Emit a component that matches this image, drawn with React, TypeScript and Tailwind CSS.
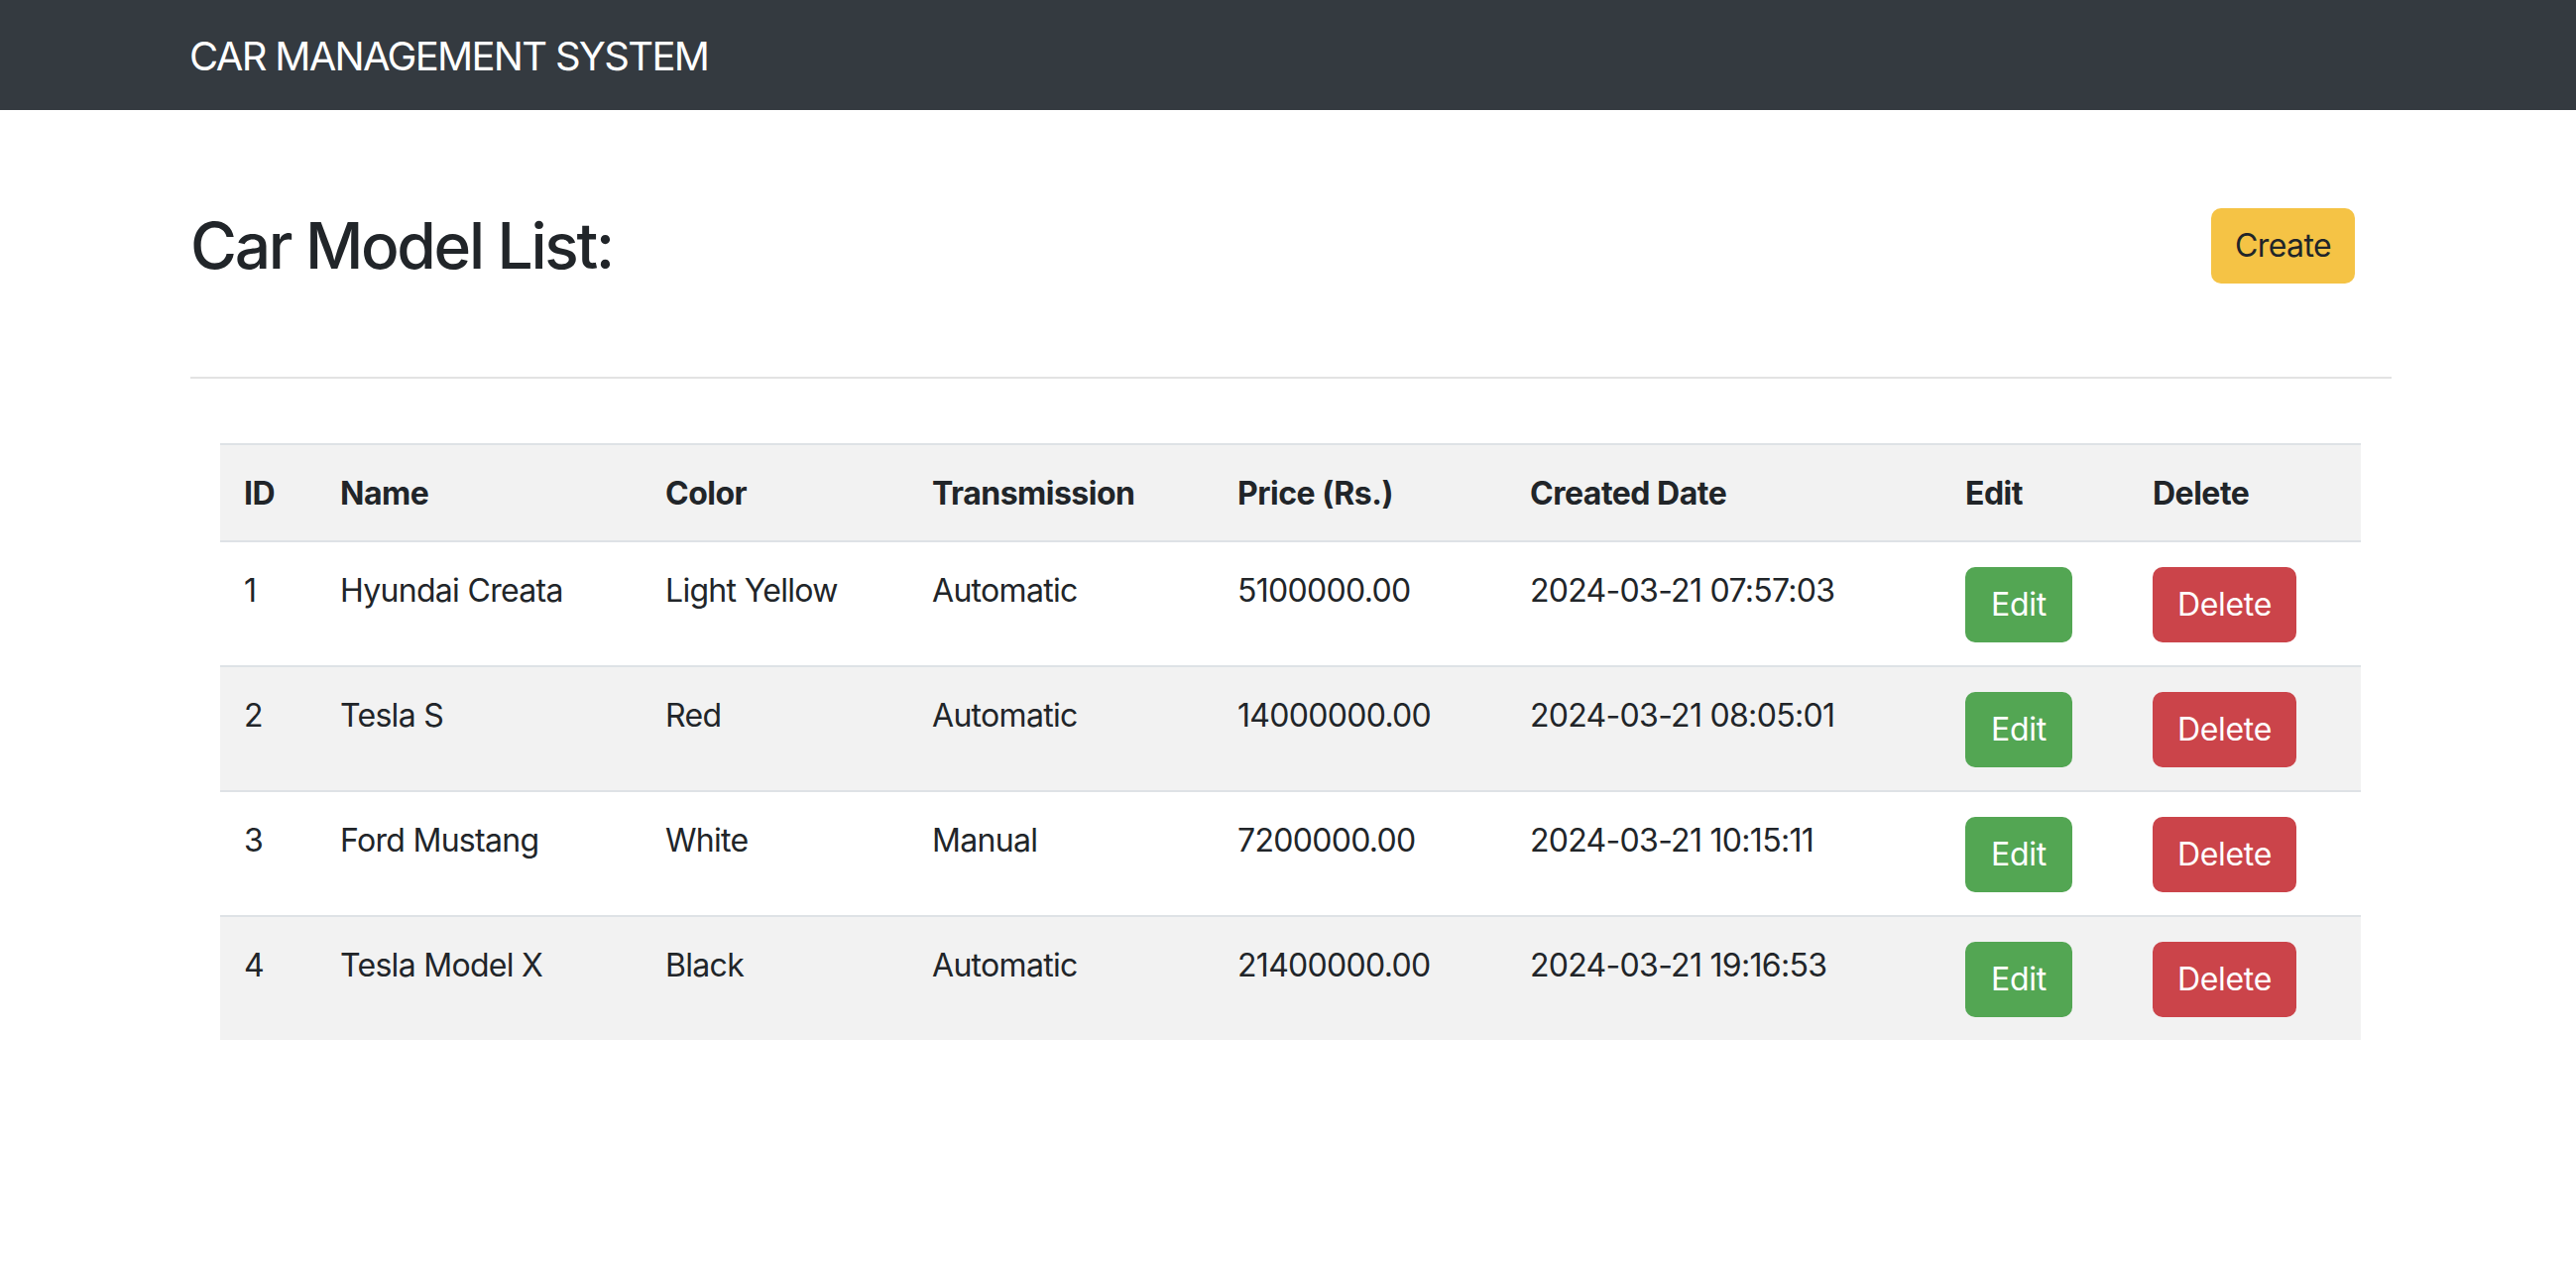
import React from "react";

const rows = [
  { id: 1, name: "Hyundai Creata", color: "Light Yellow", tr: "Automatic", price: "5100000.00", date: "2024-03-21 07:57:03" },
  { id: 2, name: "Tesla S", color: "Red", tr: "Automatic", price: "14000000.00", date: "2024-03-21 08:05:01" },
  { id: 3, name: "Ford Mustang", color: "White", tr: "Manual", price: "7200000.00", date: "2024-03-21 10:15:11" },
  { id: 4, name: "Tesla Model X", color: "Black", tr: "Automatic", price: "21400000.00", date: "2024-03-21 19:16:53" },
];

const widths = [97, 328, 269, 308, 295, 439, 189, 234];
const headers = ["ID", "Name", "Color", "Transmission", "Price (Rs.)", "Created Date", "Edit", "Delete"];

export default function App() {
  return (
    <div className="min-h-[1274px] bg-white text-[#212529]" style={{ fontFamily: "Inter, 'Noto Sans', sans-serif" }}>
      <nav className="h-[111px] bg-[#343a40] flex items-center">
        <span className="ml-[191px] mt-[2px] text-[40px] leading-[60px] tracking-[-1.7px] text-white">CAR MANAGEMENT SYSTEM</span>
      </nav>
      <div className="ml-[192px] w-[2220px] pt-[98px]">
        <div className="flex items-center justify-between h-[77px]">
          <h2 className="text-[64px] leading-[77px] font-medium tracking-[-2.3px]">Car Model List:</h2>
          <button className="mr-[37px] h-[76px] px-[24px] rounded-[10px] bg-[#f5c345] text-[32px] leading-[48px] tracking-[-0.6px] text-[#212529]">
            Create
          </button>
        </div>
        <div className="mt-[94px] h-[2px] bg-[#e3e3e3]" />
        <table className="ml-[30px] mt-[65px] border-collapse table-fixed text-[32px] leading-[48px] tracking-[-0.7px]" style={{ width: 2159 }}>
          <colgroup>
            {widths.map((w, i) => (
              <col key={i} style={{ width: w }} />
            ))}
          </colgroup>
          <thead>
            <tr className="bg-[#f2f2f2] border-t-2 border-b-2 border-[#dee2e6]">
              {headers.map((h) => (
                <th key={h} className="text-left font-bold px-[24px] pt-[25px] pb-[23px] align-top tracking-[-0.5px]">
                  {h}
                </th>
              ))}
            </tr>
          </thead>
          <tbody>
            {rows.map((r, i) => (
              <tr key={r.id} className={(i % 2 === 1 ? "bg-[#f2f2f2] " : "bg-white ") + (i < rows.length - 1 ? "border-b-2 border-[#dee2e6]" : "")}>
                <td className="px-[24px] pt-[25px] pb-[23px] align-top">{r.id}</td>
                <td className="px-[24px] pt-[25px] pb-[23px] align-top">{r.name}</td>
                <td className="px-[24px] pt-[25px] pb-[23px] align-top">{r.color}</td>
                <td className="px-[24px] pt-[25px] pb-[23px] align-top">{r.tr}</td>
                <td className="px-[24px] pt-[25px] pb-[23px] align-top">{r.price}</td>
                <td className="px-[24px] pt-[25px] pb-[23px] align-top">{r.date}</td>
                <td className="px-[24px] pt-[25px] pb-[23px] align-top">
                  <button className="h-[76px] w-[108px] rounded-[10px] bg-[#53a653] text-white text-[32px] leading-[48px] tracking-[-0.3px]">Edit</button>
                </td>
                <td className="px-[24px] pt-[25px] pb-[23px] align-top">
                  <button className="h-[76px] w-[145px] rounded-[10px] bg-[#cb444a] text-white text-[32px] leading-[48px] tracking-[-0.3px]">Delete</button>
                </td>
              </tr>
            ))}
          </tbody>
        </table>
      </div>
    </div>
  );
}
